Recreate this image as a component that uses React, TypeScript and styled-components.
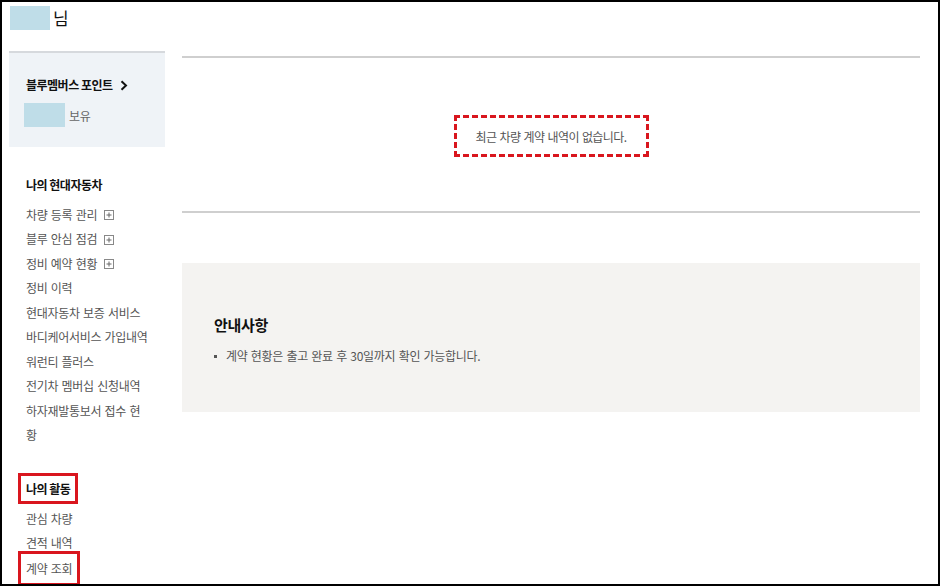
import styled, { createGlobalStyle } from "styled-components";

const GlobalStyles = createGlobalStyle`
  * { box-sizing: border-box; }
  body {
    margin: 0;
    background: #fff;
    font-family: "Noto Sans CJK KR", "Noto Sans", sans-serif;
    color: #111;
  }
`;

const Frame = styled.div`
  width: 940px;
  height: 586px;
  border: 2px solid #000;
  display: flex;
  overflow: hidden;
  background: #fff;
`;

const Sidebar = styled.aside`
  width: 156px;
  margin-left: 7px;
  flex-shrink: 0;
  display: flex;
  flex-direction: column;
`;

const Greeting = styled.div`
  height: 49px;
  padding: 4px 0 0 1px;
  display: flex;
  align-items: flex-start;
  gap: 3px;
  font-size: 17px;
  line-height: 24px;
  color: #111;
`;

const Masked = styled.span<{ $w: number }>`
  display: inline-block;
  width: ${(p) => p.$w}px;
  height: 24px;
  background: #bfdde8;
`;

const PointBox = styled.div`
  height: 96px;
  border-top: 2px solid #d6d9dd;
  background: #eff3f7;
  padding: 23px 0 0 17px;
`;

const PointTitle = styled.a`
  display: flex;
  align-items: center;
  gap: 7px;
  font-size: 12px;
  font-weight: 700;
  line-height: 18px;
  letter-spacing: -0.5px;
  color: #111;
  text-decoration: none;
`;

const PointRow = styled.div`
  margin-top: 9px;
  margin-left: -2px;
  display: flex;
  align-items: center;
  gap: 4px;
  font-size: 12px;
  letter-spacing: -0.3px;
  color: #666;
`;

const Section = styled.section<{ $top: number }>`
  margin-top: ${(p) => p.$top}px;
  padding-left: 17px;
`;

const SectionTitle = styled.h3`
  margin: 0;
  font-size: 12px;
  font-weight: 700;
  line-height: 20px;
  letter-spacing: -0.5px;
  color: #111;
`;

const Menu = styled.ul`
  list-style: none;
  margin: 7.75px 0 0;
  padding: 0;
  width: 122px;
`;

const MenuItem = styled.li`
  font-size: 12px;
  line-height: 24.5px;
  letter-spacing: -0.3px;
  word-spacing: 1px;
  color: #555;
  display: flex;
  align-items: center;
  gap: 7px;
`;

const Marked = styled.span`
  display: inline-block;
  border: 3px solid #d9161e;
  padding: 3px 5px 2px;
  margin: -5px -8px;
`;

const Main = styled.main`
  flex: 1;
  margin: 0 18px 0 17px;
  padding-top: 54px;
  display: flex;
  flex-direction: column;
`;

const RecentBlock = styled.div`
  border-top: 2px solid #cfcfcf;
  border-bottom: 2px solid #cfcfcf;
  padding: 57px 0 54px;
  display: flex;
  justify-content: center;
`;

const EmptyNotice = styled.p`
  margin: 0;
  width: 195px;
  height: 42px;
  border: 3px dashed #d9161e;
  display: flex;
  align-items: center;
  justify-content: center;
  font-size: 12px;
  letter-spacing: -0.6px;
  word-spacing: 1px;
  color: #555;
`;

const GuideBox = styled.div`
  margin-top: 50px;
  height: 149px;
  background: #f4f3f1;
  padding: 51px 32px 0;
`;

const GuideTitle = styled.h2`
  margin: 0;
  font-size: 15px;
  font-weight: 700;
  line-height: 22px;
  letter-spacing: -0.3px;
  color: #111;
`;

const GuideList = styled.ul`
  list-style: none;
  margin: 11px 0 0;
  padding: 0;
`;

const GuideItem = styled.li`
  display: flex;
  align-items: center;
  gap: 9px;
  font-size: 12px;
  line-height: 18px;
  letter-spacing: -0.3px;
  word-spacing: 1px;
  color: #555;

  &::before {
    content: "";
    width: 3px;
    height: 3px;
    background: #555;
  }
`;

function PlusBox() {
  return (
    <svg width="10" height="10" viewBox="0 0 10 10" aria-hidden>
      <rect x="0.5" y="0.5" width="9" height="9" fill="none" stroke="#888" />
      <path d="M5 2.5v5M2.5 5h5" stroke="#666" strokeWidth="1" />
    </svg>
  );
}

function Chevron() {
  return (
    <svg width="8" height="11" viewBox="0 0 8 11" aria-hidden>
      <path d="M1.5 1.2 6 5.5 1.5 9.8" fill="none" stroke="#111" strokeWidth="2" />
    </svg>
  );
}

const carMenu: { label: string; expandable?: boolean }[] = [
  { label: "차량 등록 관리", expandable: true },
  { label: "블루 안심 점검", expandable: true },
  { label: "정비 예약 현황", expandable: true },
  { label: "정비 이력" },
  { label: "현대자동차 보증 서비스" },
  { label: "바디케어서비스 가입내역" },
  { label: "워런티 플러스" },
  { label: "전기차 멤버십 신청내역" },
  { label: "하자재발통보서 접수 현황" },
];

export default function App() {
  return (
    <>
      <GlobalStyles />
      <Frame>
        <Sidebar>
          <Greeting>
            <Masked $w={40} />
            <span>님</span>
          </Greeting>
          <PointBox>
            <PointTitle href="#">
              블루멤버스 포인트 <Chevron />
            </PointTitle>
            <PointRow>
              <Masked $w={41} />
              <span>보유</span>
            </PointRow>
          </PointBox>

          <Section $top={28}>
            <SectionTitle>나의 현대자동차</SectionTitle>
            <Menu>
              {carMenu.map((m) => (
                <MenuItem key={m.label}>
                  <span>{m.label}</span>
                  {m.expandable && <PlusBox />}
                </MenuItem>
              ))}
            </Menu>
          </Section>

          <Section $top={30}>
            <SectionTitle>
              <Marked>나의 활동</Marked>
            </SectionTitle>
            <Menu>
              <MenuItem>관심 차량</MenuItem>
              <MenuItem>견적 내역</MenuItem>
              <MenuItem>
                <Marked>계약 조회</Marked>
              </MenuItem>
            </Menu>
          </Section>
        </Sidebar>

        <Main>
          <RecentBlock>
            <EmptyNotice>최근 차량 계약 내역이 없습니다.</EmptyNotice>
          </RecentBlock>
          <GuideBox>
            <GuideTitle>안내사항</GuideTitle>
            <GuideList>
              <GuideItem>계약 현황은 출고 완료 후 30일까지 확인 가능합니다.</GuideItem>
            </GuideList>
          </GuideBox>
        </Main>
      </Frame>
    </>
  );
}
